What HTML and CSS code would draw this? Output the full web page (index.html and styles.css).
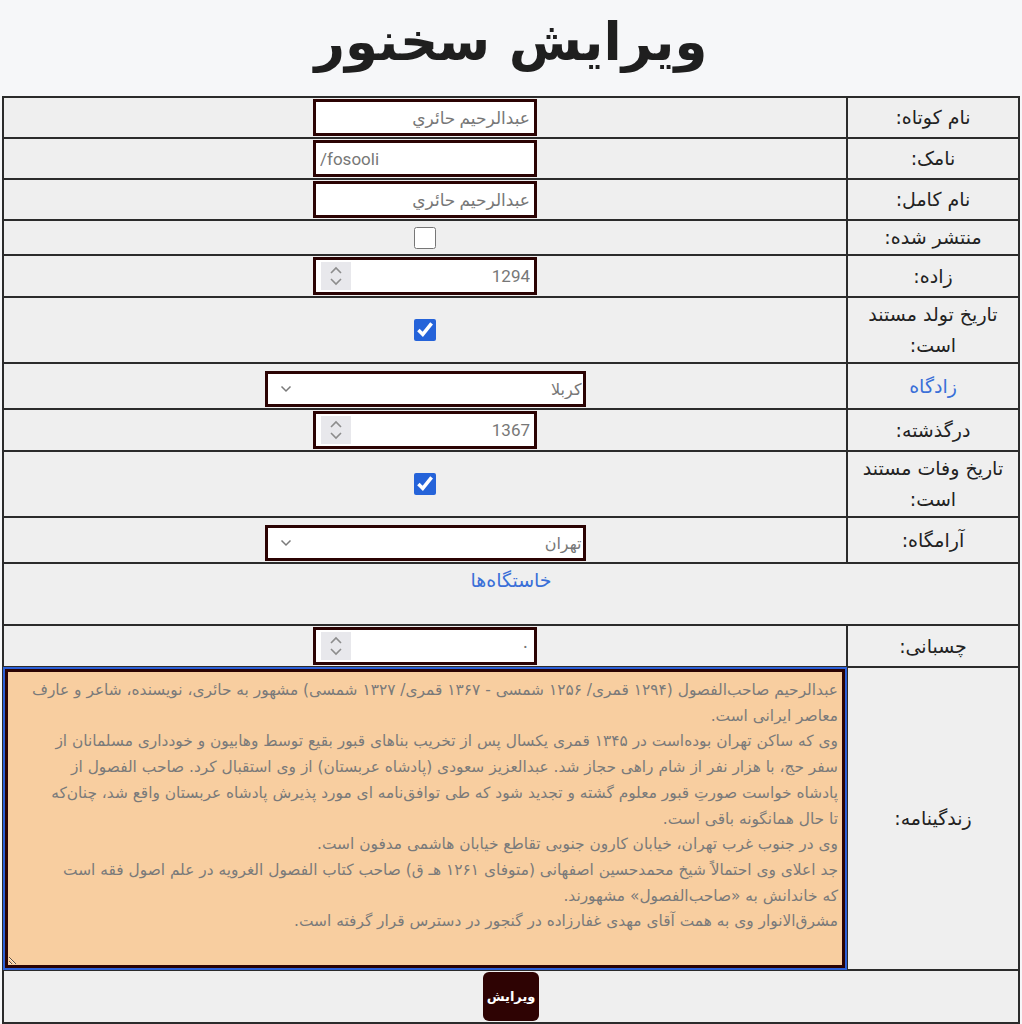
FILE: index.html
```html
<!DOCTYPE html>
<html lang="fa" dir="rtl">
<head>
<meta charset="utf-8">
<title>ویرایش سخنور</title>
<link rel="stylesheet" href="styles.css">
</head>
<body>
<h1 class="title">ویرایش سخنور</h1>
<table class="form">
  <colgroup><col class="c-label"><col class="c-field"></colgroup>
  <tr>
    <td class="label">نام کوتاه:</td>
    <td class="field"><input class="text-input" type="text" value="عبدالرحيم حائري"></td>
  </tr>
  <tr>
    <td class="label">نامک:</td>
    <td class="field"><input class="text-input ltr" type="text" dir="ltr" value="/fosooli"></td>
  </tr>
  <tr>
    <td class="label">نام کامل:</td>
    <td class="field"><input class="text-input" type="text" value="عبدالرحيم حائري"></td>
  </tr>
  <tr>
    <td class="label">منتشر شده:</td>
    <td class="field"><input class="check" type="checkbox"></td>
  </tr>
  <tr>
    <td class="label">زاده:</td>
    <td class="field">
      <div class="num-field">
        <input class="num-input" type="text" value="1294">
        <span class="spin"><svg width="30" height="28" viewBox="0 0 30 28"><path d="M10 11 L15 6 L20 11" fill="none" stroke="#8c8c8c" stroke-width="1.6"/><path d="M10 17 L15 22 L20 17" fill="none" stroke="#8c8c8c" stroke-width="1.6"/></svg></span>
      </div>
    </td>
  </tr>
  <tr>
    <td class="label">تاریخ تولد مستند است:</td>
    <td class="field"><input class="check" type="checkbox" checked></td>
  </tr>
  <tr>
    <td class="label"><a class="link" href="#">زادگاه</a></td>
    <td class="field">
      <div class="select-field">
        <select class="select"><option>کربلا</option></select>
        <svg class="chev" width="12" height="8" viewBox="0 0 12 8"><path d="M1.5 1.5 L6 6 L10.5 1.5" fill="none" stroke="#7a7a7a" stroke-width="1.5"/></svg>
      </div>
    </td>
  </tr>
  <tr>
    <td class="label">درگذشته:</td>
    <td class="field">
      <div class="num-field">
        <input class="num-input" type="text" value="1367">
        <span class="spin"><svg width="30" height="28" viewBox="0 0 30 28"><path d="M10 11 L15 6 L20 11" fill="none" stroke="#8c8c8c" stroke-width="1.6"/><path d="M10 17 L15 22 L20 17" fill="none" stroke="#8c8c8c" stroke-width="1.6"/></svg></span>
      </div>
    </td>
  </tr>
  <tr>
    <td class="label">تاریخ وفات مستند است:</td>
    <td class="field"><input class="check" type="checkbox" checked></td>
  </tr>
  <tr>
    <td class="label">آرامگاه:</td>
    <td class="field">
      <div class="select-field">
        <select class="select"><option>تهران</option></select>
        <svg class="chev" width="12" height="8" viewBox="0 0 12 8"><path d="M1.5 1.5 L6 6 L10.5 1.5" fill="none" stroke="#7a7a7a" stroke-width="1.5"/></svg>
      </div>
    </td>
  </tr>
  <tr>
    <td class="wide" colspan="2"><a class="link" href="#">خاستگاه‌ها</a><div class="spacer"></div></td>
  </tr>
  <tr>
    <td class="label">چسبانی:</td>
    <td class="field">
      <div class="num-field">
        <input class="num-input" type="text" value="۰">
        <span class="spin"><svg width="30" height="28" viewBox="0 0 30 28"><path d="M10 11 L15 6 L20 11" fill="none" stroke="#8c8c8c" stroke-width="1.6"/><path d="M10 17 L15 22 L20 17" fill="none" stroke="#8c8c8c" stroke-width="1.6"/></svg></span>
      </div>
    </td>
  </tr>
  <tr>
    <td class="label">زندگینامه:</td>
    <td class="field bio-cell"><textarea class="bio">
عبدالرحیم صاحب‌الفصول (۱۲۹۴ قمری/ ۱۲۵۶ شمسی - ۱۳۶۷ قمری/ ۱۳۲۷ شمسی) مشهور به حائری، نویسنده، شاعر و عارف
معاصر ایرانی است.
وی که ساکن تهران بوده‌است در ۱۳۴۵ قمری یکسال پس از تخریب بناهای قبور بقیع توسط وهابیون و خودداری مسلمانان از
سفر حج، با هزار نفر از شام راهی حجاز شد. عبدالعزیز سعودی (پادشاه عربستان) از وی استقبال کرد. صاحب الفصول از
پادشاه خواست صورتِ قبور معلوم گشته و تجدید شود که طی توافق‌نامه ای مورد پذیرش پادشاه عربستان واقع شد، چنان‌که
تا حال همانگونه باقی است.
وی در جنوب غرب تهران، خیابان کارون جنوبی تقاطع خیابان هاشمی مدفون است.
جد اعلای وی احتمالاً شیخ محمدحسین اصفهانی (متوفای ۱۲۶۱ هـ ق) صاحب کتاب الفصول الغرویه در علم اصول فقه است
که خاندانش به «صاحب‌الفصول» مشهورند.
مشرق‌الانوار وی به همت آقای مهدی غفارزاده در گنجور در دسترس قرار گرفته است.</textarea></td>
  </tr>
  <tr>
    <td class="wide" colspan="2"><button class="submit" type="button">ویرایش</button></td>
  </tr>
</table>
</body>
</html>
```

FILE: styles.css
```css
html, body {
  margin: 0;
  background: #f6f7f9;
}

body {
  padding: 0 2px;
  font-family: "DejaVu Sans", sans-serif;
  color: #222;
}

.title {
  margin: 0;
  height: 96px;
  line-height: 84px;
  text-align: center;
  font-size: 53px;
  font-weight: bold;
  color: #1f1f1f;
}

.form {
  width: 100%;
  table-layout: fixed;
  border-collapse: collapse;
  background: #efefef;
  border: 2px solid #2b2b2b;
}

.c-label {
  width: 172px;
}

.form td {
  border: 2px solid #2b2b2b;
  padding: 1px;
  text-align: center;
  vertical-align: middle;
}

.form td.label {
  font-size: 19px;
  line-height: 31px;
  color: #222;
  padding: 1px 3px;
}

.link {
  color: #3a6fd8;
  text-decoration: none;
  font-size: 19px;
  line-height: 30px;
}

.text-input {
  display: block;
  margin: 0 auto;
  box-sizing: border-box;
  width: 224px;
  height: 37px;
  border: 3px solid #2b0303;
  background: #fff;
  padding: 0 4px;
  font-family: Roboto, "DejaVu Sans", sans-serif;
  font-size: 17px;
  color: #777;
  text-align: right;
}

.text-input.ltr {
  text-align: left;
}

.check {
  display: block;
  margin: 1px auto;
  width: 22px;
  height: 22px;
  accent-color: #2563d9;
}

.num-field {
  display: flex;
  align-items: center;
  box-sizing: border-box;
  width: 224px;
  height: 38px;
  margin: 0 auto;
  border: 3px solid #2b0303;
  background: #fff;
  padding: 0 3px;
}

.num-input {
  flex: 1;
  min-width: 0;
  border: 0;
  outline: 0;
  background: transparent;
  padding: 0 1px;
  font-family: Roboto, "DejaVu Sans", sans-serif;
  font-size: 17px;
  color: #777;
  text-align: right;
}

.spin {
  display: flex;
  width: 30px;
  height: 28px;
  background: #e8e8ec;
  margin-left: 2px;
}

.select-field {
  display: flex;
  align-items: center;
  box-sizing: border-box;
  width: 321px;
  height: 36px;
  margin: 6px auto 0;
  border: 3px solid #2b0303;
  background: #fff;
  padding: 0 0 0 12px;
}

.select {
  flex: 1;
  appearance: none;
  -webkit-appearance: none;
  border: 0;
  outline: 0;
  background: transparent;
  padding: 0 1px;
  font-family: Roboto, "DejaVu Sans", sans-serif;
  font-size: 16px;
  color: #777;
  text-align: right;
}

.chev {
  flex: none;
}

.wide {
  text-align: center;
}

.spacer {
  height: 28px;
}

.bio-cell {
  padding: 0;
}

.bio {
  display: block;
  box-sizing: border-box;
  width: 100%;
  height: 299px;
  margin: 0;
  border: 3px solid #2b0303;
  outline: 2px solid #2c60d8;
  background: #f8cea0;
  padding: 6px 4px;
  font-family: "DejaVu Sans", sans-serif;
  font-size: 15.4px;
  line-height: 25.7px;
  color: #7a7a7a;
  text-align: right;
  resize: both;
}

.submit {
  display: block;
  margin: 0 auto;
  height: 49px;
  padding: 0 4px;
  border: 0;
  border-radius: 6px;
  background: #2e0303;
  color: #fff;
  font-family: "DejaVu Sans", sans-serif;
  font-size: 13px;
  font-weight: bold;
}
```
